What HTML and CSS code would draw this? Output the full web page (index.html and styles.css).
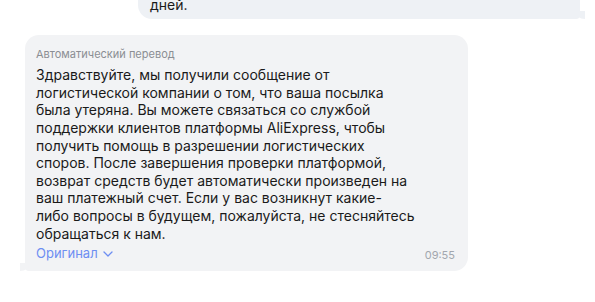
FILE: index.html
```html
<html lang="ru">
<head>
	<meta charset="utf-8">
	<meta name="viewport" content="width=device-width, initial-scale=1.0" />
	<title>Чат</title>

	<link rel="stylesheet" href="styles.css">
</head>
<body>
	<div class="chat">
		<div class="msg out">
			<p class="text">Мы свяжемся с вами в течение нескольких рабочих<br>дней.</p>
			<span class="meta">08:32
				<svg class="check" width="9" height="7" viewBox="0 0 9 7"><path d="M1 3.5 L3.5 6 L8 1" fill="none" stroke="#2bb24c" stroke-width="1.6" stroke-linecap="round" stroke-linejoin="round"/></svg>
			</span>
		</div>

		<div class="msg in">
			<div class="label">Автоматический перевод</div>
			<p class="text">Здравствуйте, мы получили сообщение от логистической компании о том, что ваша посылка была утеряна. Вы можете связаться со службой поддержки клиентов платформы AliExpress, чтобы получить помощь в разрешении логистических споров. После завершения проверки платформой, возврат средств будет автоматически произведен на ваш платежный счет. Если у вас возникнут какие-<br>либо вопросы в будущем, пожалуйста, не стесняйтесь обращаться к нам.</p>
			<div class="foot">
				<a class="orig" href="#">Оригинал
					<svg width="10" height="6" viewBox="0 0 10 6"><path d="M1 1 L5 5 L9 1" fill="none" stroke="#6d8ef2" stroke-width="1.3" stroke-linecap="round" stroke-linejoin="round"/></svg>
				</a>
				<span class="time">09:55</span>
			</div>
		</div>
	</div>
</body>
</html>
```

FILE: styles.css
```css
html {
	font: 14px/17.6px Inter, "Noto Sans", sans-serif;
	color: #1a1a1a;
	background: #fff;
}

body {
	margin: 0;
}

.chat {
	display: flex;
	flex-direction: column;
	gap: 16px;
	padding: 0 12px 0 25px;
	margin-top: -28px; /* scrolled */
}

.msg {
	position: relative;
	border-radius: 14px;
}

.text {
	margin: 0;
}

/* outgoing */
.out {
	align-self: flex-end;
	width: 442px;
	box-sizing: border-box;
	background: #eef1f5;
	padding: 6px 12px 6px 12px;
	border-bottom-right-radius: 4px;
	margin-right: 3px;
}

.out .meta {
	position: absolute;
	right: 14px;
	bottom: 14px;
	font-size: 11px;
	color: #9aa1ab;
	display: flex;
	align-items: center;
	gap: 10px;
}

.out::after {
	content: "";
	position: absolute;
	right: -5px;
	bottom: 0;
	width: 10px;
	height: 8px;
	background: #eef1f5;
	border-bottom-left-radius: 10px 8px;
}

/* incoming */
.in {
	width: 443px;
	box-sizing: border-box;
	background: #f2f3f5;
	padding: 12px 11px 6px 11px;
	border-bottom-left-radius: 4px;
}

.in .text {
	max-width: 383px;
}

.in::before {
	content: "";
	position: absolute;
	left: -5px;
	bottom: 0;
	width: 10px;
	height: 8px;
	background: #f2f3f5;
	border-bottom-right-radius: 10px 8px;
}

.label {
	font-size: 11px;
	line-height: 14px;
	color: #8b8e93;
	margin-bottom: 5px;
}

.foot {
	display: flex;
	justify-content: space-between;
	align-items: center;
	margin-top: 1px;
}

.orig {
	color: #6d8ef2;
	text-decoration: none;
	font-size: 13px;
	display: flex;
	align-items: center;
	gap: 5px;
}

.time {
	font-size: 11px;
	color: #a2a7ae;
	margin-right: 2px;
	padding-top: 4px;
}
```
